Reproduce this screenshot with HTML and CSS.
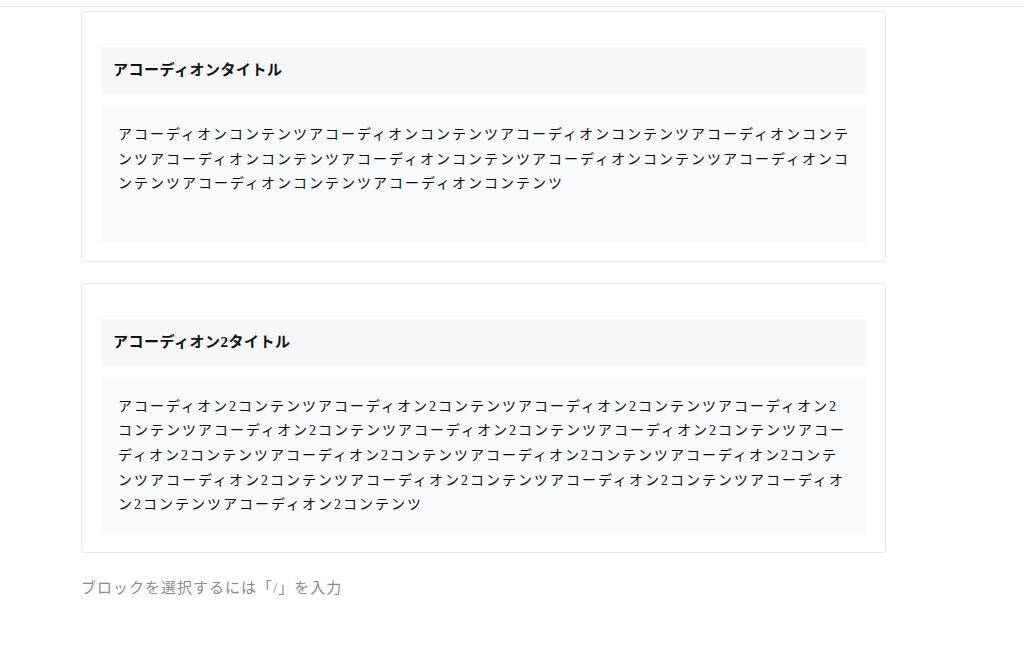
FILE: index.html
```html
<!DOCTYPE html>
<html lang="ja">
<head>
<meta charset="utf-8">
<title>Accordion</title>
<link rel="stylesheet" href="styles.css">
</head>
<body>
<div class="topbar"></div>
<main class="editor">
  <section class="accordion">
    <div class="acc-title">アコーディオンタイトル</div>
    <div class="acc-body">
      <p>アコーディオンコンテンツアコーディオンコンテンツアコーディオンコンテンツアコーディオンコンテンツアコーディオンコンテンツアコーディオンコンテンツアコーディオンコンテンツアコーディオンコンテンツアコーディオンコンテンツアコーディオンコンテンツ</p>
      <p class="blank"><br></p>
    </div>
  </section>
  <section class="accordion">
    <div class="acc-title">アコーディオン2タイトル</div>
    <div class="acc-body">
      <p>アコーディオン2コンテンツアコーディオン2コンテンツアコーディオン2コンテンツアコーディオン2コンテンツアコーディオン2コンテンツアコーディオン2コンテンツアコーディオン2コンテンツアコーディオン2コンテンツアコーディオン2コンテンツアコーディオン2コンテンツアコーディオン2コンテンツアコーディオン2コンテンツアコーディオン2コンテンツアコーディオン2コンテンツアコーディオン2コンテンツアコーディオン2コンテンツ</p>
    </div>
  </section>
  <p class="placeholder">ブロックを選択するには「/」を入力</p>
</main>
</body>
</html>
```
FILE: styles.css
```css
html, body {
  margin: 0;
  padding: 0;
  background: #ffffff;
}
body {
  font-family: "Liberation Serif", "Noto Sans CJK JP", serif;
  color: #1a1a1a;
}
.topbar {
  height: 6px;
  border-bottom: 1px solid #e6e6e6;
}
.editor {
  width: 805px;
  margin-left: 81px;
  padding-top: 4px;
  display: flex;
  flex-direction: column;
  gap: 21px;
}
.accordion {
  border: 1px solid #e9e9e9;
  border-radius: 3px;
  padding: 35px 19px 19px;
  display: flex;
  flex-direction: column;
  gap: 15px;
  background: #fff;
}
.acc-title {
  box-sizing: border-box;
  height: 46px;
  display: flex;
  align-items: center;
  padding: 0 12px 3px;
  background: #f6f7f8;
  font-size: 15px;
  font-weight: 700;
  letter-spacing: 0.5px;
  color: #111;
  border-radius: 2px;
}
.acc-body {
  background: #f9fafb;
  padding: 15px 14px 15px 17px;
  font-size: 14px;
  line-height: 24.6px;
  letter-spacing: 2px;
  color: #0d0d0d;
  border-radius: 2px;
}
.acc-body p {
  margin: 0;
}
.acc-body .blank {
  height: 30px;
}
.placeholder {
  margin: 2px 0 0;
  font-size: 15px;
  letter-spacing: 1px;
  color: #8a8a8a;
}
```
